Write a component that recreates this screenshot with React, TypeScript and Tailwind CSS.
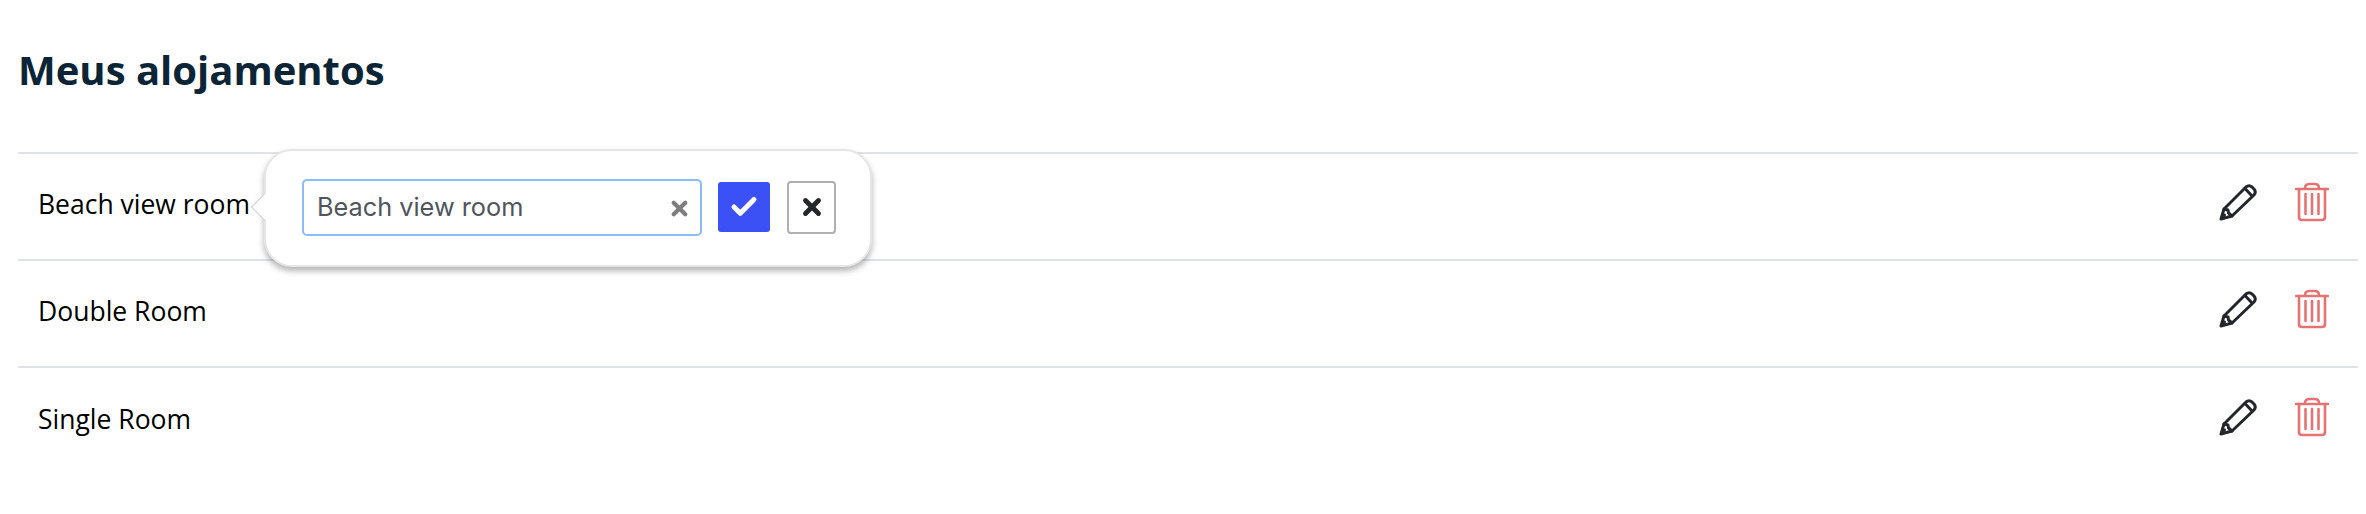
import { Check, X } from "lucide-react";

const rooms = ["Beach view room", "Double Room", "Single Room"];

const PencilIcon = () => (
  <svg width="40" height="40" viewBox="0 0 40 40" fill="none" stroke="#23272b" strokeWidth="3" strokeLinejoin="round" strokeLinecap="round">
    <path d="M3 37 L6 27 L28 5 Q31 2.5 34 5 L36 7 Q38.5 10 36 13 L14 34 Z" />
    <path d="M6 27 L10 28 L10.5 31 L14 34" />
    <path d="M3.5 36.5 L6.5 33" />
    <path d="M27 6.5 L34 14" />
  </svg>
);

const TrashIcon = () => (
  <svg width="34" height="40" viewBox="0 0 34 40" fill="none" stroke="#e57373" strokeWidth="2.6" strokeLinejoin="round" strokeLinecap="round">
    <path d="M1 7 H33" />
    <path d="M10 6.5 Q10 2 14 2 H20 Q24 2 24 6.5" />
    <path d="M4 7 V35 Q4 38 7 38 H27 Q30 38 30 35 V7" />
    <path d="M10.5 12 V32 M17 12 V32 M23.5 12 V32" />
  </svg>
);

const EditPopover = () => (
  <div className="absolute left-[246px] top-[-5px] z-10 flex h-[118px] w-[608px] items-center rounded-[28px] border-2 border-[#e6e6e6] bg-white pb-[2px] pl-[36px] shadow-[0_4px_6px_rgba(0,0,0,0.3)]">
    <div className="absolute left-[-11px] top-[46px] h-[20px] w-[20px] rotate-45 border-b border-l border-[#cfcfcf] bg-white" />
    <div className="flex h-[57px] w-[400px] items-center justify-between rounded-[5px] border-2 border-[#8bbcfa] pl-[13px] pr-[9px]">
      <span className="font-['Inter',sans-serif] text-[25.3px] text-[#50555c]">Beach view room</span>
      <X size={23} strokeWidth={4.5} className="mt-[3px] text-[#7d7d7d]" />
    </div>
    <button type="button" className="ml-[16px] flex h-[50px] w-[52px] items-center justify-center rounded-[3px] bg-[#3b51f5]">
      <Check size={30} strokeWidth={4} className="text-white" />
    </button>
    <button type="button" className="ml-[17px] flex h-[53px] w-[49px] items-center justify-center rounded-[4px] border-2 border-[#b0b0b0] bg-white">
      <X size={26} strokeWidth={4.5} className="text-[#23272b]" />
    </button>
  </div>
);

export default function App() {
  return (
    <div className="min-h-[514px] bg-white pl-[18px] pr-[8px] font-['Open_Sans','Liberation_Sans',sans-serif]">
      <h1 className="pt-[45px] text-[40px] leading-[50px] font-bold text-[#0c2536]">Meus alojamentos</h1>
      <ul className="mt-[57px] border-t-2 border-[#e0e3e6]">
        {rooms.map((room, index) => (
          <li key={room} className="relative flex h-[107px] items-center justify-between border-b-2 border-[#e0e3e6] pl-[20px] pr-[29px] last:border-b-0">
            <span className="-mt-[3px] text-[26.5px] text-black">{room}</span>
            {index === 0 && <EditPopover />}
            <div className="-mt-[9px] flex items-center gap-[37px]">
              <PencilIcon />
              <TrashIcon />
            </div>
          </li>
        ))}
      </ul>
    </div>
  );
}
